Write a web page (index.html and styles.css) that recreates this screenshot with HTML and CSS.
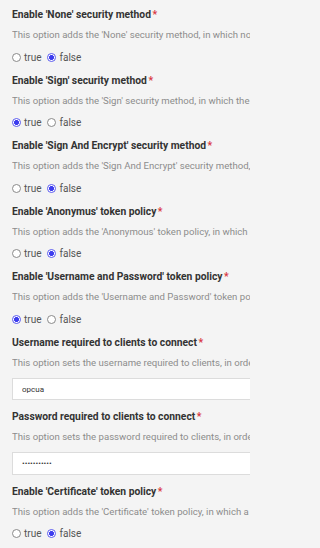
FILE: index.html
```html
<!DOCTYPE html>
<html>
<head>
<meta charset="utf-8">
<link rel="stylesheet" href="styles.css">
</head>
<body>
<div class="form">
  <div class="field">
    <div class="label">Enable 'None' security method<span class="req">*</span></div>
    <div class="desc">This option adds the 'None' security method, in which no messages are signed or encrypted.</div>
    <div class="radios">
      <label class="opt"><input type="radio" name="r1"><span>true</span></label>
      <label class="opt"><input type="radio" name="r1" checked><span>false</span></label>
    </div>
  </div>
  <div class="field">
    <div class="label">Enable 'Sign' security method<span class="req">*</span></div>
    <div class="desc">This option adds the 'Sign' security method, in which the messages are signed.</div>
    <div class="radios">
      <label class="opt"><input type="radio" name="r2" checked><span>true</span></label>
      <label class="opt"><input type="radio" name="r2"><span>false</span></label>
    </div>
  </div>
  <div class="field">
    <div class="label">Enable 'Sign And Encrypt' security method<span class="req">*</span></div>
    <div class="desc">This option adds the 'Sign And Encrypt' security method, in which the messages are signed and encrypted.</div>
    <div class="radios">
      <label class="opt"><input type="radio" name="r3"><span>true</span></label>
      <label class="opt"><input type="radio" name="r3" checked><span>false</span></label>
    </div>
  </div>
  <div class="field">
    <div class="label">Enable 'Anonymus' token policy<span class="req">*</span></div>
    <div class="desc">This option adds the 'Anonymous' token policy, in which no credentials are required.</div>
    <div class="radios">
      <label class="opt"><input type="radio" name="r4"><span>true</span></label>
      <label class="opt"><input type="radio" name="r4" checked><span>false</span></label>
    </div>
  </div>
  <div class="field">
    <div class="label">Enable 'Username and Password' token policy<span class="req">*</span></div>
    <div class="desc">This option adds the 'Username and Password' token policy, in which clients authenticate.</div>
    <div class="radios">
      <label class="opt"><input type="radio" name="r5" checked><span>true</span></label>
      <label class="opt"><input type="radio" name="r5"><span>false</span></label>
    </div>
  </div>
  <div class="field field-input">
    <div class="label">Username required to clients to connect<span class="req">*</span></div>
    <div class="desc">This option sets the username required to clients, in order to connect.</div>
    <input class="text" type="text" value="opcua">
  </div>
  <div class="field field-input">
    <div class="label">Password required to clients to connect<span class="req">*</span></div>
    <div class="desc">This option sets the password required to clients, in order to connect.</div>
    <input class="text pass" type="password" value="opcuaopcua1">
  </div>
  <div class="field">
    <div class="label">Enable 'Certificate' token policy<span class="req">*</span></div>
    <div class="desc">This option adds the 'Certificate' token policy, in which a certificate is required.</div>
    <div class="radios">
      <label class="opt"><input type="radio" name="r8"><span>true</span></label>
      <label class="opt"><input type="radio" name="r8" checked><span>false</span></label>
    </div>
  </div>
</div>
</body>
</html>
```
FILE: styles.css
```css
html {
  margin: 0;
  padding: 0;
  background: #f4f4f4;
}
body {
  margin: 0;
  padding: 0;
  width: 250px;
  height: 548px;
  background: #f4f4f4;
  overflow: hidden;
  font-family: Roboto, "Liberation Sans", sans-serif;
  color: #333;
}
.form {
  width: 250px;
  box-sizing: border-box;
  padding: 8px 0 0 12px;
  overflow: hidden;
}
.field {
  margin-bottom: 8.5px;
  overflow: hidden;
}
.field-input {
  margin-bottom: 9.8px;
}
.label {
  font-size: 10.3px;
  font-weight: bold;
  line-height: 14px;
  color: #333;
  white-space: nowrap;
}
.req {
  color: #d9363e;
  margin-left: 1.5px;
}
.desc {
  margin-top: 6px;
  font-size: 9.6px;
  line-height: 14px;
  color: #8c8c8c;
  white-space: nowrap;
}
.radios {
  display: flex;
  gap: 6px;
  margin-top: 7px;
  height: 16px;
  align-items: center;
}
.opt {
  display: flex;
  align-items: center;
  gap: 3px;
  font-size: 10px;
  color: #555;
}
.opt input {
  appearance: none;
  -webkit-appearance: none;
  margin: 0;
  width: 9px;
  height: 9px;
  border: 1px solid #8a8a8a;
  border-radius: 50%;
  background: #fff;
  box-sizing: border-box;
}
.opt input:checked {
  border-color: #5b5bf0;
  background: radial-gradient(circle, #3c3cee 0 2.2px, #fff 2.6px);
}
.text {
  display: block;
  margin: 8.3px 0 0 0;
  box-sizing: border-box;
  width: 300px;
  height: 22.5px;
  border: 1px solid #dcdcdc;
  border-radius: 0;
  background: #fff;
  padding: 0 9px;
  font-family: Roboto, "Liberation Sans", sans-serif;
  font-size: 8px;
  color: #333;
  outline: none;
}
```
